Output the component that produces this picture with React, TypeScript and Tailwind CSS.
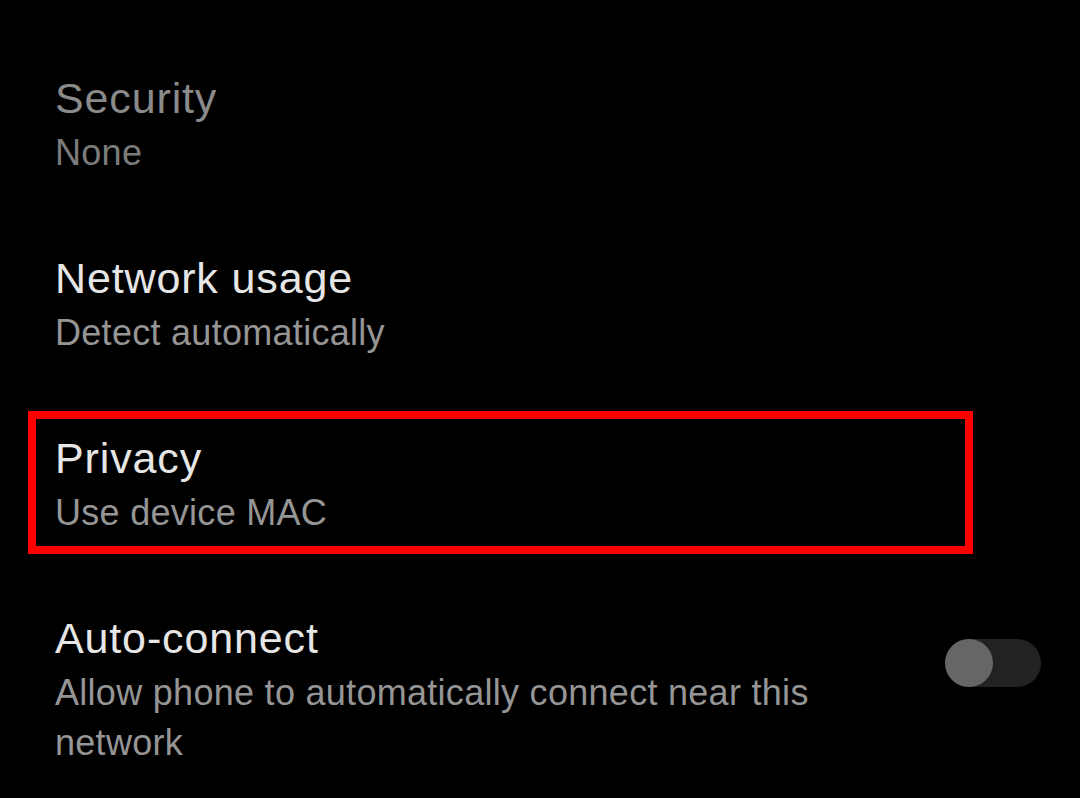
import { useState } from 'react';

type Row = {
  title: string;
  subtitle: string;
  disabled?: boolean;
  highlighted?: boolean;
  toggle?: boolean;
};

const rows: Row[] = [
  { title: 'Security', subtitle: 'None', disabled: true },
  { title: 'Network usage', subtitle: 'Detect automatically' },
  { title: 'Privacy', subtitle: 'Use device MAC', highlighted: true },
  { title: 'Auto-connect', subtitle: 'Allow phone to automatically connect near this network', toggle: true },
];

function Toggle({ on, onChange }: { on: boolean; onChange: () => void }) {
  return (
    <button
      onClick={onChange}
      className={`mt-[29px] w-[96px] h-[48px] rounded-full shrink-0 flex items-center ${on ? 'bg-[#2f5f2f] justify-end' : 'bg-[#222222] justify-start'}`}
    >
      <span className="block w-[48px] h-[48px] rounded-full bg-[#666666]" />
    </button>
  );
}

export default function App() {
  const [autoConnect, setAutoConnect] = useState(false);

  return (
    <div
      className="w-[1080px] h-[798px] bg-black overflow-hidden pt-[70px]"
      style={{ fontFamily: '"Liberation Sans", Arial, sans-serif' }}
    >
      <div className="flex flex-col gap-[72px]">
        {rows.map((row) => (
          <div key={row.title} className="relative flex items-start pl-[55px] pr-[39px]">
            {/* red annotation frame */}
            {row.highlighted && (
              <div className="absolute -top-[19px] left-[28px] w-[945px] h-[143px] border-8 border-[#ff0000] pointer-events-none" />
            )}
            <div className="flex-1 pr-[60px]">
              <div className={`text-[43px] leading-[56px] tracking-[0.02em] ${row.disabled ? 'text-[#8a8a8a]' : 'text-[#e6e6e6]'}`}>
                {row.title}
              </div>
              <div className={`mt-[2px] text-[36px] leading-[50px] tracking-[0.008em] ${row.disabled ? 'text-[#7c7c7c]' : 'text-[#959595]'}`}>
                {row.subtitle}
              </div>
            </div>
            {row.toggle && <Toggle on={autoConnect} onChange={() => setAutoConnect(!autoConnect)} />}
          </div>
        ))}
      </div>
    </div>
  );
}
